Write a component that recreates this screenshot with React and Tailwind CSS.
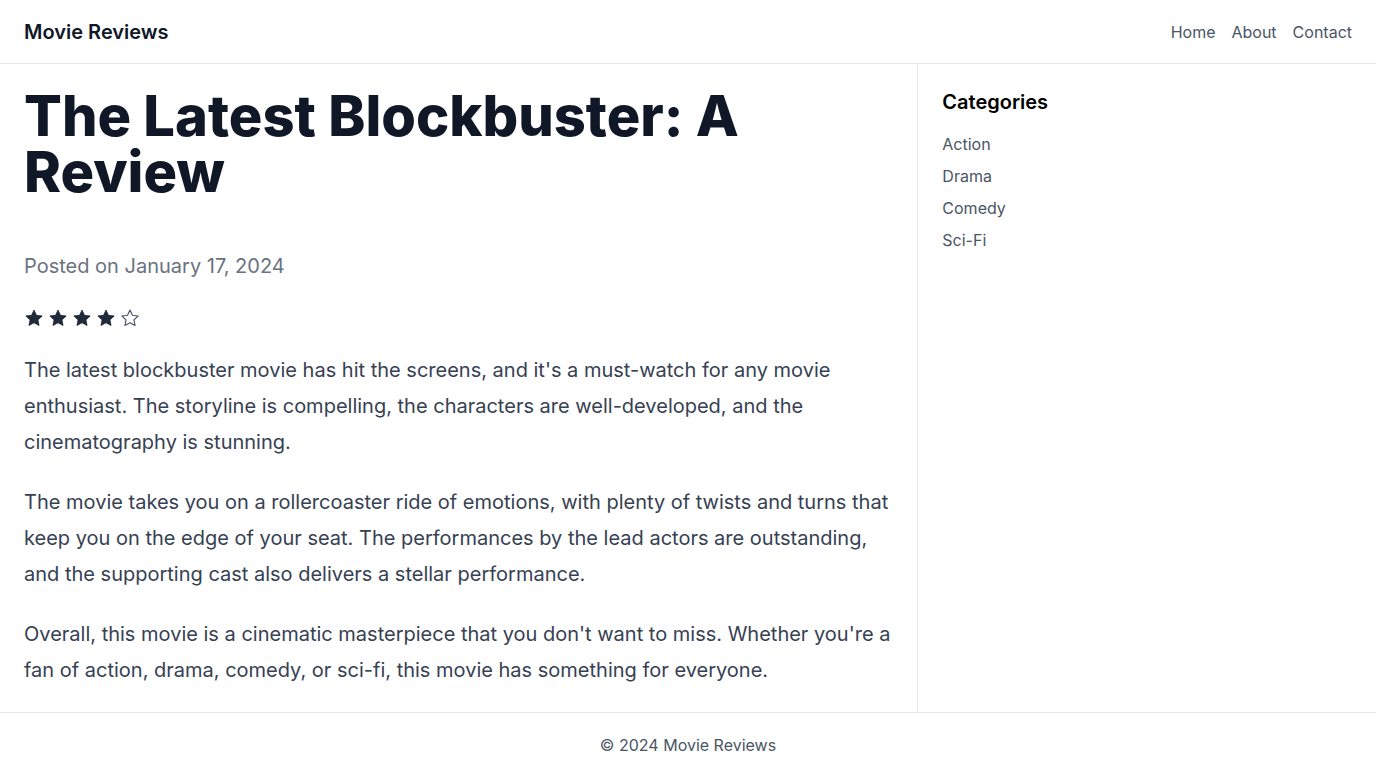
import React from "react";

function Star({ filled }) {
  return (
    <svg width="20" height="20" viewBox="0 0 24 24" className="block">
      <path
        d="M12 2.5l2.94 6.22 6.81.84-5.02 4.7 1.3 6.74L12 17.67 5.97 21l1.3-6.74-5.02-4.7 6.81-.84z"
        fill={filled ? "#1f2937" : "none"}
        stroke={filled ? "#1f2937" : "#4b5563"}
        strokeWidth={filled ? 1 : 1.4}
        strokeLinejoin="round"
      />
    </svg>
  );
}

export default function App() {
  return (
    <div className="min-h-screen bg-white flex flex-col" style={{ fontFamily: "Inter, 'Noto Sans', sans-serif" }}>
      <header className="h-16 border-b border-gray-200 flex items-center justify-between px-6">
        <div className="text-xl font-semibold text-gray-900">Movie Reviews</div>
        <nav className="flex gap-4 text-base text-gray-600">
          <a>Home</a>
          <a>About</a>
          <a>Contact</a>
        </nav>
      </header>
      <div className="grid grid-cols-3">
        <main className="col-span-2 p-6">
          <h1 className="text-[56px] leading-[56px] font-extrabold text-gray-900 mb-12">
            The Latest Blockbuster: A Review
          </h1>
          <p className="text-xl leading-9 text-gray-500">Posted on January 17, 2024</p>
          <div className="flex gap-1 mt-6">
            <Star filled />
            <Star filled />
            <Star filled />
            <Star filled />
            <Star />
          </div>
          <div className="text-xl leading-9 text-gray-700">
            <p className="mt-6">
              The latest blockbuster movie has hit the screens, and it's a must-watch for any movie enthusiast. The storyline is compelling, the characters are well-developed, and the cinematography is stunning.
            </p>
            <p className="mt-6">
              The movie takes you on a rollercoaster ride of emotions, with plenty of twists and turns that keep you on the edge of your seat. The performances by the lead actors are outstanding, and the supporting cast also delivers a stellar performance.
            </p>
            <p className="mt-6">
              Overall, this movie is a cinematic masterpiece that you don't want to miss. Whether you're a fan of action, drama, comedy, or sci-fi, this movie has something for everyone.
            </p>
          </div>
        </main>
        <aside className="col-span-1 border-l border-gray-200 p-6">
          <h2 className="text-xl leading-7 font-semibold text-black">Categories</h2>
          <ul className="mt-4 flex flex-col gap-2 text-base text-gray-600">
            <li>Action</li>
            <li>Drama</li>
            <li>Comedy</li>
            <li>Sci-Fi</li>
          </ul>
        </aside>
      </div>
      <footer className="border-t border-gray-200 py-5 text-center text-base text-gray-600">
        © 2024 Movie Reviews
      </footer>
    </div>
  );
}
